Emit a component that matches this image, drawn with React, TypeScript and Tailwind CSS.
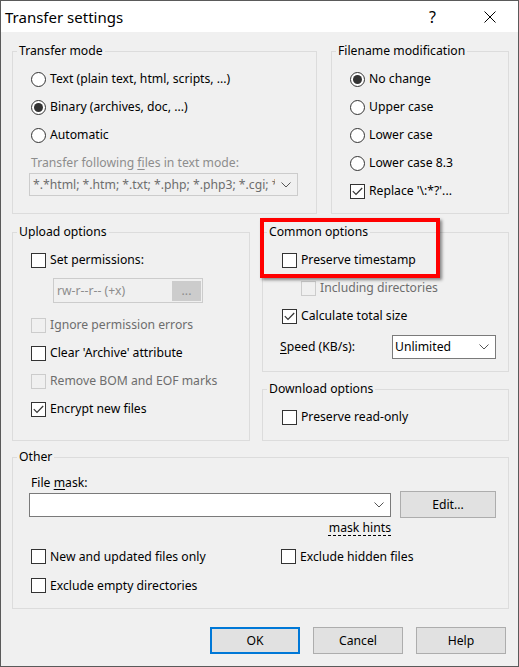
import React from "react";

type GroupProps = {
    title: string;
    className?: string;
    children?: React.ReactNode;
};

function Group({ title, className, children }: GroupProps) {
    return (
        <fieldset className={`border border-[#dcdcdc] ${className ?? ""}`}>
            <legend className="ml-[4px] px-[2px] leading-[16px]">{title}</legend>
            {children}
        </fieldset>
    );
}

function Chevron() {
    return (
        <svg width="10" height="6" viewBox="0 0 10 6" className="shrink-0">
            <path d="M0.5 0.5 L5 5 L9.5 0.5" fill="none" stroke="#555" strokeWidth="1" />
        </svg>
    );
}

function Radio({ label, checked }: { label: string; checked?: boolean }) {
    return (
        <div className="flex h-[28px] items-center">
            <span className="flex h-[15px] w-[15px] items-center justify-center rounded-full border border-[#333] bg-white">
                {checked && <span className="h-[9px] w-[9px] rounded-full bg-[#333]" />}
            </span>
            <span className="ml-[4px] whitespace-nowrap">{label}</span>
        </div>
    );
}

type CheckProps = {
    label: React.ReactNode;
    checked?: boolean;
    disabled?: boolean;
    className?: string;
};

function Check({ label, checked, disabled, className }: CheckProps) {
    return (
        <div className={`flex h-[28px] items-center ${className ?? ""}`}>
            <span
                className={`flex h-[15px] w-[15px] shrink-0 items-center justify-center border ${
                    disabled ? "border-[#cccccc] bg-[#f0f0f0]" : "border-[#333] bg-white"
                }`}
            >
                {checked && (
                    <svg width="11" height="9" viewBox="0 0 11 9">
                        <path d="M0.8 4.2 L4 7.4 L10.2 1" fill="none" stroke="#333" strokeWidth="1.2" />
                    </svg>
                )}
            </span>
            <span className={`ml-[4px] whitespace-nowrap ${disabled ? "text-[#6d6d6d]" : ""}`}>{label}</span>
        </div>
    );
}

export default function App() {
    return (
        <div className="relative flex h-[667px] w-[519px] flex-col border border-[#5a5a5a] bg-[#f0f0f0] font-['Noto_Sans',sans-serif] text-[12.2px] leading-[16px] text-black">
            {/* title bar */}
            <div className="flex h-[31px] shrink-0 items-center bg-white">
                <span className="pl-[4px] text-[15px]">Transfer settings</span>
                <div className="ml-auto flex h-full">
                    <span className="flex w-[57px] items-center justify-center text-[16px]">?</span>
                    <span className="flex w-[57px] items-center justify-center">
                        <svg width="12" height="12" viewBox="0 0 12 12">
                            <path d="M0.5 0.5 L11.5 11.5 M11.5 0.5 L0.5 11.5" stroke="#000" strokeWidth="1" />
                        </svg>
                    </span>
                </div>
            </div>

            <div className="flex flex-col pl-[11px] pt-[11px]">
                <div className="flex">
                    <Group title="Transfer mode" className="h-[171px] w-[305px]">
                        <div className="pl-[18px] pt-[6px]">
                            <Radio label="Text (plain text, html, scripts, ...)" />
                            <Radio label="Binary (archives, doc, ...)" checked />
                            <Radio label="Automatic" />
                            <div className="mt-[6px] whitespace-nowrap text-[#8d8d8d]">
                                Transfer following <span className="underline underline-offset-2">f</span>iles in text mode:
                            </div>
                            <div className="-ml-[2px] mt-[2px] flex h-[23px] w-[269px] items-center border border-[#cccccc] bg-[#f0f0f0] pr-[6px]">
                                <span className="flex-1 overflow-hidden whitespace-nowrap pl-[3px] text-[#6d6d6d]">
                                    *.*html; *.htm; *.txt; *.php; *.php3; *.cgi; *.c; *.cpp; *.h; *.pas
                                </span>
                                <span className="ml-[6px]">
                                    <Chevron />
                                </span>
                            </div>
                        </div>
                    </Group>
                    <Group title="Filename modification" className="ml-[14px] h-[171px] w-[178px]">
                        <div className="pl-[18px] pt-[6px]">
                            <Radio label="No change" checked />
                            <Radio label="Upper case" />
                            <Radio label="Lower case" />
                            <Radio label="Lower case 8.3" />
                            <Check label="Replace '\:*?'..." checked />
                        </div>
                    </Group>
                </div>

                <div className="mt-[10px] flex">
                    <Group title="Upload options" className="h-[217px] w-[238px]">
                        <div className="pl-[18px] pt-[6px]">
                            <Check label="Set permissions:" />
                            <div className="ml-[22px] mt-[4px] flex h-[25px] w-[150px] items-center border border-[#cccccc] bg-[#f0f0f0]">
                                <span className="pl-[3px] text-[#8d8d8d]">rw-r--r-- (+x)</span>
                                <span className="ml-auto mr-[1px] flex h-[20px] w-[29px] items-center justify-center bg-[#cccccc] text-[#8d8d8d]">
                                    ...
                                </span>
                            </div>
                            <Check label="Ignore permission errors" disabled className="mt-[8px]" />
                            <Check label="Clear 'Archive' attribute" />
                            <Check label="Remove BOM and EOF marks" disabled />
                            <Check label="Encrypt new files" checked />
                        </div>
                    </Group>
                    <div className="ml-[12px] flex w-[247px] flex-col">
                        <Group title="Common options" className="h-[148px] w-full">
                            <div className="pl-[19px] pt-[6px]">
                                <Check label="Preserve timestamp" />
                                <Check label="Including directories" disabled className="ml-[19px]" />
                                <Check label="Calculate total size" checked />
                                <div className="-ml-[2px] mt-[5px] flex items-center">
                                    <span className="w-[112px]">
                                        <span className="underline underline-offset-2">S</span>peed (KB/s):
                                    </span>
                                    <div className="flex h-[24px] w-[104px] items-center border border-[#7a7a7a] bg-white pl-[2px] pr-[6px]">
                                        <span className="flex-1">Unlimited</span>
                                        <Chevron />
                                    </div>
                                </div>
                            </div>
                        </Group>
                        <Group title="Download options" className="mt-[9px] h-[60px] w-full">
                            <div className="pl-[19px] pt-[6px]">
                                <Check label="Preserve read-only" />
                            </div>
                        </Group>
                    </div>
                </div>

                <Group title="Other" className="mt-[8px] h-[160px] w-[497px]">
                    <div className="pl-[16px] pt-[10px]">
                        <div className="ml-[2px]">
                            File <span className="underline underline-offset-2">m</span>ask:
                        </div>
                        <div className="flex h-[27px] items-center">
                            <div className="flex h-[24px] w-[362px] items-center justify-end border border-[#7a7a7a] bg-white pr-[6px]">
                                <Chevron />
                            </div>
                            <button className="ml-[9px] h-[27px] w-[96px] border border-[#adadad] bg-[#e1e1e1]">Edit...</button>
                        </div>
                        <div className="mt-[2px] flex w-[362px] justify-end">
                            <span className="underline decoration-dashed underline-offset-[3px]">mask hints</span>
                        </div>
                        <div className="mt-[6px] grid grid-cols-[250px_1fr] pl-[2px]">
                            <Check label="New and updated files only" className="h-[29px]" />
                            <Check label="Exclude hidden files" className="h-[29px]" />
                            <Check label="Exclude empty directories" className="h-[29px]" />
                        </div>
                    </div>
                </Group>
            </div>

            <div className="mt-[18px] flex justify-end gap-[13px] pr-[12px]">
                <button className="h-[27px] w-[90px] border-2 border-[#0078d7] bg-[#e1e1e1]">OK</button>
                <button className="h-[27px] w-[90px] border border-[#adadad] bg-[#e1e1e1]">Cancel</button>
                <button className="h-[27px] w-[90px] border border-[#adadad] bg-[#e1e1e1]">Help</button>
            </div>

            {/* highlight drawn over the dialog */}
            <div className="pointer-events-none absolute left-[259px] top-[217px] h-[60px] w-[180px] border-4 border-[#ff0000] shadow-[2px_2px_3px_rgba(0,0,0,0.45)]" />
        </div>
    );
}
